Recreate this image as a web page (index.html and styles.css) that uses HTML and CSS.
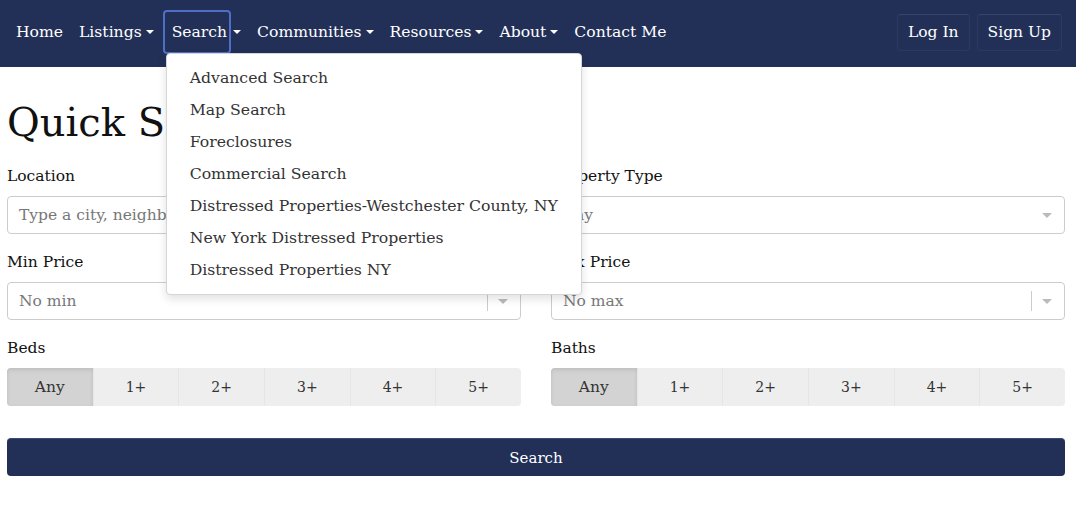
FILE: index.html
```html
<!DOCTYPE html>
<html lang="en">
<head>
<meta charset="utf-8">
<title>Quick Search</title>
<link rel="stylesheet" href="styles.css">
</head>
<body>
<header class="navbar">
  <nav class="nav-main">
    <a class="nav-item"><span class="nav-text">Home</span></a>
    <a class="nav-item"><span class="nav-text">Listings</span><span class="caret"></span></a>
    <div class="nav-item nav-open">
      <span class="nav-text nav-focus">Search</span><span class="caret caret-tight"></span>
      <ul class="dropdown">
        <li>Advanced Search</li>
        <li>Map Search</li>
        <li>Foreclosures</li>
        <li>Commercial Search</li>
        <li>Distressed Properties-Westchester County, NY</li>
        <li>New York Distressed Properties</li>
        <li>Distressed Properties NY</li>
      </ul>
    </div>
    <a class="nav-item"><span class="nav-text">Communities</span><span class="caret"></span></a>
    <a class="nav-item"><span class="nav-text">Resources</span><span class="caret"></span></a>
    <a class="nav-item"><span class="nav-text">About</span><span class="caret"></span></a>
    <a class="nav-item"><span class="nav-text">Contact Me</span></a>
  </nav>
  <div class="nav-auth">
    <a class="auth-btn">Log In</a>
    <a class="auth-btn">Sign Up</a>
  </div>
</header>

<main class="content">
  <h1 class="title">Quick Search</h1>
  <form class="form-grid">
    <div class="field">
      <label class="field-label">Location</label>
      <div class="input">Type a city, neighborhood, address or ZIP</div>
    </div>
    <div class="field">
      <label class="field-label">Property Type</label>
      <div class="input select"><span>Any</span><span class="arrow"></span></div>
    </div>
    <div class="field">
      <label class="field-label">Min Price</label>
      <div class="input select"><span>No min</span><span class="sep"></span><span class="arrow"></span></div>
    </div>
    <div class="field">
      <label class="field-label">Max Price</label>
      <div class="input select"><span>No max</span><span class="sep"></span><span class="arrow"></span></div>
    </div>
    <div class="field">
      <label class="field-label">Beds</label>
      <div class="btn-group">
        <span class="opt active">Any</span><span class="opt">1+</span><span class="opt">2+</span><span class="opt">3+</span><span class="opt">4+</span><span class="opt">5+</span>
      </div>
    </div>
    <div class="field">
      <label class="field-label">Baths</label>
      <div class="btn-group">
        <span class="opt active">Any</span><span class="opt">1+</span><span class="opt">2+</span><span class="opt">3+</span><span class="opt">4+</span><span class="opt">5+</span>
      </div>
    </div>
    <button type="button" class="search-btn">Search</button>
  </form>
</main>
</body>
</html>
```

FILE: styles.css
```css
* { box-sizing: border-box; }
html, body { margin: 0; padding: 0; background: #fff; }
body {
  font-family: "DejaVu Serif", "Liberation Serif", serif;
  font-size: 15.5px;
  color: #212529;
  overflow: hidden;
}

.navbar {
  height: 67px;
  background: #223058;
  display: flex;
  align-items: center;
  justify-content: space-between;
  padding: 0 14px 3px 8px;
  position: relative;
  z-index: 5;
}
.nav-main { display: flex; align-items: center; }
.nav-item {
  position: relative;
  display: flex;
  align-items: center;
  color: #fff;
  font-size: 15.6px;
  padding: 0 8px;
  height: 44px;
}
.nav-text { display: flex; align-items: center; height: 44px; }
.nav-focus {
  margin-left: -7px;
  padding: 0 2px 0 7px;
  border: 2px solid #4f6fc6;
  border-radius: 4px;
}
.caret {
  width: 0; height: 0;
  margin-left: 4px;
  border-left: 4px solid transparent;
  border-right: 4px solid transparent;
  border-top: 4px solid #fff;
}
.caret-tight { margin-left: 2px; }
.dropdown {
  position: absolute;
  top: 43px;
  left: 4px;
  width: 416px;
  margin: 0;
  padding: 8px 0;
  list-style: none;
  background: #fff;
  border: 1px solid #d5d5d5;
  border-radius: 4px;
  box-shadow: 0 4px 10px rgba(0,0,0,0.12);
  color: #333;
  font-size: 15.7px;
}
.dropdown li {
  height: 32px;
  line-height: 32px;
  padding-left: 23px;
  white-space: nowrap;
}

.nav-auth { display: flex; gap: 7px; }
.auth-btn {
  color: #fff;
  font-size: 15.5px;
  height: 37px;
  display: flex;
  align-items: center;
  padding: 0 10px;
  border: 1px solid #2c3a63;
  border-top-color: #36456f;
  border-radius: 4px;
}

.content { padding: 0 11px 0 7px; }
.title {
  font-weight: normal;
  font-size: 40px;
  line-height: 48px;
  margin: 31px 0 18px;
  color: #111;
}
.form-grid {
  display: grid;
  grid-template-columns: 1fr 1fr;
  column-gap: 30px;
}
.field { margin-bottom: 16px; }
.field-label {
  display: block;
  line-height: 24px;
  margin-bottom: 8px;
  color: #111;
}
.input {
  height: 38px;
  border: 1px solid #ccc;
  border-radius: 4px;
  padding: 0 11px;
  display: flex;
  align-items: center;
  color: #777;
  white-space: nowrap;
  overflow: hidden;
}
.select span:first-child { flex: 1; }
.sep { width: 1px; height: 20px; background: #ccc; margin-right: 10px; }
.arrow {
  width: 0; height: 0;
  border-left: 5px solid transparent;
  border-right: 5px solid transparent;
  border-top: 5px solid #bbb;
  margin-right: 1px;
}
.btn-group {
  display: grid;
  grid-template-columns: repeat(6, 1fr);
  height: 38px;
  border-radius: 4px;
  overflow: hidden;
  background: #eee;
}
.opt {
  display: flex;
  align-items: center;
  justify-content: center;
  color: #333;
  font-size: 14px;
  border-left: 1px solid #e6e6e6;
}
.opt:first-child { border-left: none; }
.opt.active {
  background: #d3d3d3;
  box-shadow: inset 0 2px 4px rgba(0,0,0,0.1);
  font-size: 15.5px;
}
.search-btn {
  grid-column: 1 / 3;
  margin-top: 16px;
  height: 38px;
  border: none;
  border-top: 1px solid #3a4a78;
  border-radius: 4px;
  background: #223058;
  color: #fff;
  font-family: inherit;
  font-size: 15px;
}
```
